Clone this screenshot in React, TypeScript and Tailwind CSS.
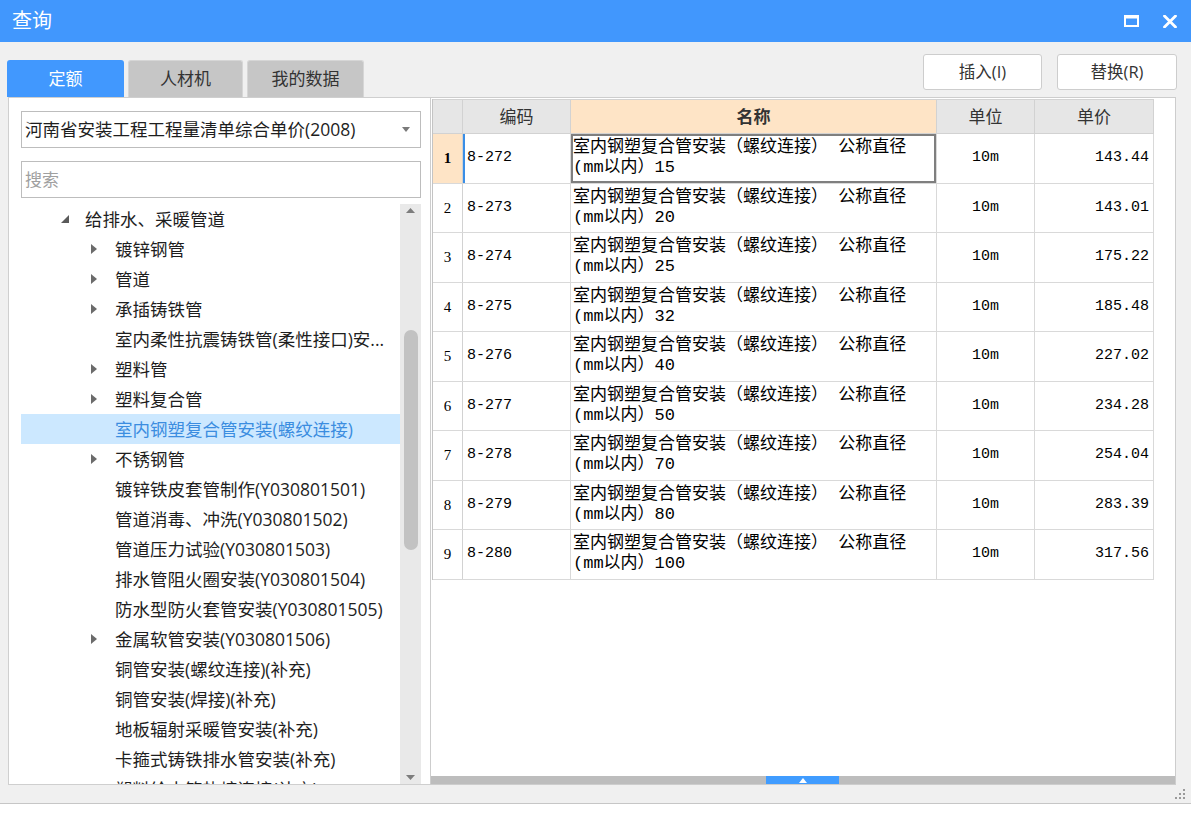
import React from 'react';

type TreeNode = { label: string; level: 0 | 1; arrow?: 'open' | 'closed'; selected?: boolean };

const treeNodes: TreeNode[] = [
  { label: '给排水、采暖管道', level: 0, arrow: 'open' },
  { label: '镀锌钢管', level: 1, arrow: 'closed' },
  { label: '管道', level: 1, arrow: 'closed' },
  { label: '承插铸铁管', level: 1, arrow: 'closed' },
  { label: '室内柔性抗震铸铁管(柔性接口)安...', level: 1 },
  { label: '塑料管', level: 1, arrow: 'closed' },
  { label: '塑料复合管', level: 1, arrow: 'closed' },
  { label: '室内钢塑复合管安装(螺纹连接)', level: 1, selected: true },
  { label: '不锈钢管', level: 1, arrow: 'closed' },
  { label: '镀锌铁皮套管制作(Y030801501)', level: 1 },
  { label: '管道消毒、冲洗(Y030801502)', level: 1 },
  { label: '管道压力试验(Y030801503)', level: 1 },
  { label: '排水管阻火圈安装(Y030801504)', level: 1 },
  { label: '防水型防火套管安装(Y030801505)', level: 1 },
  { label: '金属软管安装(Y030801506)', level: 1, arrow: 'closed' },
  { label: '铜管安装(螺纹连接)(补充)', level: 1 },
  { label: '铜管安装(焊接)(补充)', level: 1 },
  { label: '地板辐射采暖管安装(补充)', level: 1 },
  { label: '卡箍式铸铁排水管安装(补充)', level: 1 },
  { label: '塑料给水管热熔连接(补充)', level: 1 },
];

const rows = [
  { code: '8-272', dia: '15', price: '143.44' },
  { code: '8-273', dia: '20', price: '143.01' },
  { code: '8-274', dia: '25', price: '175.22' },
  { code: '8-275', dia: '32', price: '185.48' },
  { code: '8-276', dia: '40', price: '227.02' },
  { code: '8-277', dia: '50', price: '234.28' },
  { code: '8-278', dia: '70', price: '254.04' },
  { code: '8-279', dia: '80', price: '283.39' },
  { code: '8-280', dia: '100', price: '317.56' },
];

const ui = "font-['Open_Sans','Noto_Sans_CJK_SC',sans-serif]";
const grid = "font-['Liberation_Mono','Noto_Sans_CJK_SC',monospace]";

const TreeRow: React.FC<{ node: TreeNode }> = ({ node }) => (
  <div
    className={`h-[30px] shrink-0 flex items-center whitespace-nowrap ${
      node.level === 0 ? 'pl-[40px]' : 'pl-[70px]'
    } ${node.selected ? 'bg-[#cce8ff] text-[#3b8de0]' : 'text-[#1e1e1e]'}`}
  >
    <span className="w-[24px] flex items-center">
      {node.arrow === 'closed' && (
        <svg width="6" height="10" viewBox="0 0 6 10">
          <path d="M0 0 L6 5 L0 10 Z" fill="#6b6b6b" />
        </svg>
      )}
      {node.arrow === 'open' && (
        <svg width="8" height="8" viewBox="0 0 8 8">
          <path d="M8 0 L8 8 L0 8 Z" fill="#5a5a5a" />
        </svg>
      )}
    </span>
    <span className="leading-[30px]">{node.label}</span>
  </div>
);

export default function App() {
  return (
    <div className={`w-[1191px] h-[820px] bg-white ${ui}`}>
      <div className="h-[804px] bg-[#f0f0f0] border-b border-[#c6c6c6] flex flex-col">
        {/* title bar */}
        <div className="h-[42px] shrink-0 bg-[#4197fd] flex items-center justify-between pl-[12px] pr-[14px]">
          <span className="text-white text-[20px] leading-none">查询</span>
          <div className="flex items-center gap-[24px]">
            <svg width="15" height="12" viewBox="0 0 15 12">
              <rect x="1" y="1" width="13" height="10" fill="none" stroke="white" strokeWidth="2" />
              <rect x="0" y="0" width="15" height="3.5" fill="white" />
            </svg>
            <svg width="14" height="13" viewBox="0 0 14 13">
              <path d="M1.5 1 L12.5 12 M12.5 1 L1.5 12" stroke="white" strokeWidth="2.8" strokeLinecap="round" />
            </svg>
          </div>
        </div>

        {/* tabs + buttons */}
        <div className="h-[55px] shrink-0 flex justify-between pl-[7px] pr-[14px]">
          <div className="flex gap-[4px] pt-[18px]">
            <div className="w-[117px] h-[37px] rounded-t-[3px] bg-[#4198fe] text-white text-[17px] flex items-center justify-center">
              定额
            </div>
            <div className="w-[115px] h-[37px] rounded-t-[3px] bg-[#c6c6c6] border border-b-0 border-[#d6d6d6] text-[#333] text-[17px] flex items-center justify-center">
              人材机
            </div>
            <div className="w-[117px] h-[37px] rounded-t-[3px] bg-[#c6c6c6] border border-b-0 border-[#d6d6d6] text-[#333] text-[17px] flex items-center justify-center">
              我的数据
            </div>
          </div>
          <div className="flex gap-[15px] pt-[12px]">
            <button className="w-[119px] h-[36px] bg-white border border-[#cdcdcd] rounded-[3px] text-[16.5px] text-[#333]">
              插入(I)
            </button>
            <button className="w-[120px] h-[36px] bg-white border border-[#cdcdcd] rounded-[3px] text-[16.5px] text-[#333]">
              替换(R)
            </button>
          </div>
        </div>

        {/* panels */}
        <div className="h-[688px] shrink-0 flex pl-[8px] pr-[15px]">
          {/* left panel */}
          <div className="w-[422px] bg-white border-l border-t border-b border-[#cfcfcf] pl-[12px] pr-[9px] pt-[13px] flex flex-col">
            <div className="h-[37px] shrink-0 border border-[#bdbdbd] flex items-center justify-between pl-[3px] pr-[10px]">
              <span className="text-[17.5px] text-[#1e1e1e] whitespace-nowrap">河南省安装工程工程量清单综合单价(2008)</span>
              <svg width="8" height="5" viewBox="0 0 8 5">
                <path d="M0 0 L8 0 L4 5 Z" fill="#7a7a7a" />
              </svg>
            </div>
            <div className="h-[37px] shrink-0 mt-[13px] border border-[#bdbdbd] flex items-center pl-[3px]">
              <span className="text-[17px] text-[#a0a0a0]">搜索</span>
            </div>
            <div className="mt-[6px] flex-1 flex min-h-0">
              <div className="flex-1 flex flex-col overflow-hidden text-[17.5px]">
                {treeNodes.map((n, i) => (
                  <TreeRow key={i} node={n} />
                ))}
              </div>
              {/* vertical scrollbar */}
              <div className="w-[21px] shrink-0 bg-[#e9e9e9] flex flex-col items-center">
                <svg className="mt-[4px]" width="9" height="5" viewBox="0 0 9 5">
                  <path d="M0 5 L4.5 0 L9 5 Z" fill="#7d7d7d" />
                </svg>
                <div className="mt-[117px] w-[14px] h-[220px] rounded-full bg-[#c2c2c2]" />
                <div className="flex-1" />
                <svg className="mb-[4px]" width="9" height="5" viewBox="0 0 9 5">
                  <path d="M0 0 L9 0 L4.5 5 Z" fill="#7d7d7d" />
                </svg>
              </div>
            </div>
          </div>

          {/* right panel */}
          <div className="w-[746px] bg-white border border-[#cdcdcd] pt-[1px] flex flex-col">
            <div className="flex-1 min-h-0 pl-[1px]">
              <div className="w-[722px] border-l border-[#c4c4c4]">
                {/* header */}
                <div className="h-[35px] flex border-b border-t border-[#d2d2d2] text-[17px] text-[#333]">
                  <div className="w-[30px] bg-[#e6e6e6] border-r border-[#d2d2d2]" />
                  <div className="w-[108px] bg-[#e6e6e6] border-r border-[#d2d2d2] flex items-center justify-center">编码</div>
                  <div className="w-[366px] bg-[#fee4c6] border-r border-[#d2d2d2] flex items-center justify-center font-bold">名称</div>
                  <div className="w-[98px] bg-[#e6e6e6] border-r border-[#d2d2d2] flex items-center justify-center">单位</div>
                  <div className="w-[119px] bg-[#e6e6e6] border-r border-[#d2d2d2] flex items-center justify-center">单价</div>
                </div>
                {rows.map((r, i) => (
                  <div key={r.code} className="h-[49.5px] flex border-b border-[#d9d9d9] text-black">
                    <div
                      className={`w-[30px] border-r border-[#d2d2d2] flex items-center justify-center font-['Liberation_Serif',serif] text-[15px] ${
                        i === 0 ? 'bg-[#fee4c6] font-bold' : 'bg-white'
                      }`}
                    >
                      {i + 1}
                    </div>
                    <div
                      className={`w-[108px] border-r border-[#d9d9d9] flex items-center pl-[4px] text-[15px] ${grid} ${
                        i === 0 ? 'shadow-[inset_2px_0_0_#3a8ee6]' : ''
                      }`}
                    >
                      {r.code}
                    </div>
                    <div
                      className={`w-[366px] border-r border-[#d9d9d9] flex flex-col justify-center pl-[2px] text-[17px] leading-[20px] whitespace-nowrap ${grid} ${
                        i === 0 ? 'shadow-[inset_0_0_0_2px_#7f7f7f]' : ''
                      }`}
                    >
                      <span>室内钢塑复合管安装（螺纹连接） 公称直径</span>
                      <span>(mm以内）{r.dia}</span>
                    </div>
                    <div className={`w-[98px] border-r border-[#d9d9d9] flex items-center justify-center text-[15px] ${grid}`}>
                      10m
                    </div>
                    <div className={`w-[119px] border-r border-[#d9d9d9] flex items-center justify-end pr-[4px] text-[15px] ${grid}`}>
                      {r.price}
                    </div>
                  </div>
                ))}
              </div>
            </div>
            {/* horizontal scrollbar */}
            <div className="h-[8px] shrink-0 bg-[#bdbdbd] flex">
              <div className="ml-[335px] w-[73px] h-[8px] bg-[#409cff] flex items-center justify-center">
                <svg width="8" height="5" viewBox="0 0 8 5">
                  <path d="M0 5 L4 0 L8 5 Z" fill="white" />
                </svg>
              </div>
            </div>
          </div>
        </div>

        {/* bottom strip with grip */}
        <div className="flex-1 flex justify-end items-end pr-[5px] pb-[3px]">
          <svg width="12" height="12" viewBox="0 0 12 12">
            <rect x="9" y="1" width="2" height="2" fill="#9a9a9a" />
            <rect x="5" y="5" width="2" height="2" fill="#9a9a9a" />
            <rect x="9" y="5" width="2" height="2" fill="#9a9a9a" />
            <rect x="1" y="9" width="2" height="2" fill="#9a9a9a" />
            <rect x="5" y="9" width="2" height="2" fill="#9a9a9a" />
            <rect x="9" y="9" width="2" height="2" fill="#9a9a9a" />
          </svg>
        </div>
      </div>
    </div>
  );
}
